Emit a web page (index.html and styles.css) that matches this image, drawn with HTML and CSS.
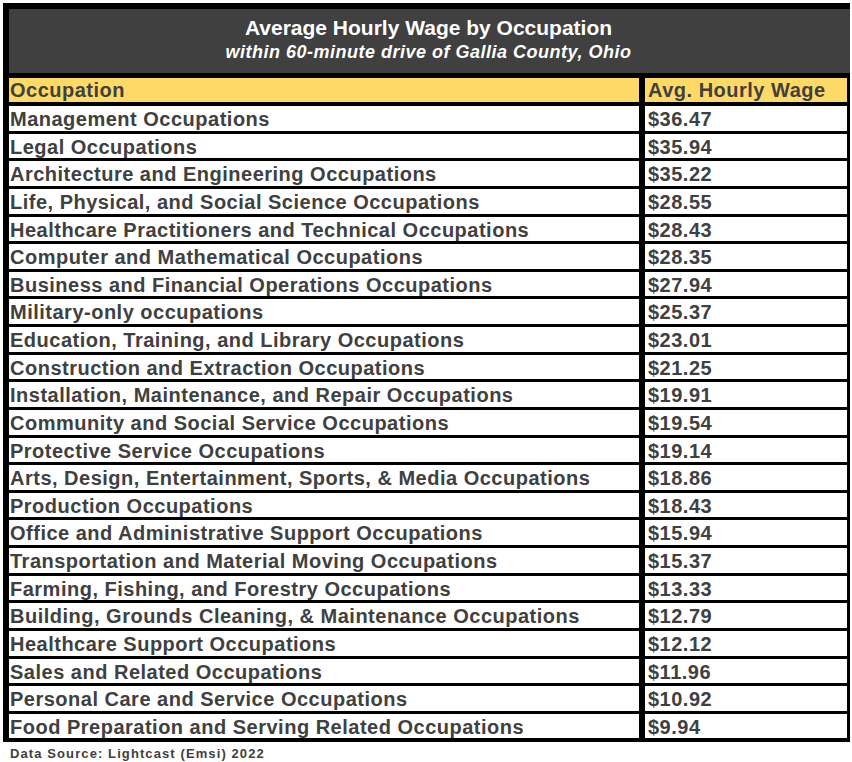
FILE: index.html
```html
<!DOCTYPE html>
<html>
<head>
<meta charset="utf-8">
<link rel="stylesheet" href="styles.css">
</head>
<body>
<div class="frame">
  <div class="banner">
    <div class="title">Average Hourly Wage by Occupation</div>
    <div class="subtitle">within 60-minute drive of Gallia County, Ohio</div>
  </div>
  <div class="thead">
    <div class="hcell">Occupation</div>
    <div class="hcell num">Avg. Hourly Wage</div>
  </div>
  <div class="tbody">
    <div class="cell">Management Occupations</div><div class="cell num">$36.47</div>
    <div class="cell">Legal Occupations</div><div class="cell num">$35.94</div>
    <div class="cell">Architecture and Engineering Occupations</div><div class="cell num">$35.22</div>
    <div class="cell">Life, Physical, and Social Science Occupations</div><div class="cell num">$28.55</div>
    <div class="cell">Healthcare Practitioners and Technical Occupations</div><div class="cell num">$28.43</div>
    <div class="cell">Computer and Mathematical Occupations</div><div class="cell num">$28.35</div>
    <div class="cell">Business and Financial Operations Occupations</div><div class="cell num">$27.94</div>
    <div class="cell">Military-only occupations</div><div class="cell num">$25.37</div>
    <div class="cell">Education, Training, and Library Occupations</div><div class="cell num">$23.01</div>
    <div class="cell">Construction and Extraction Occupations</div><div class="cell num">$21.25</div>
    <div class="cell">Installation, Maintenance, and Repair Occupations</div><div class="cell num">$19.91</div>
    <div class="cell">Community and Social Service Occupations</div><div class="cell num">$19.54</div>
    <div class="cell">Protective Service Occupations</div><div class="cell num">$19.14</div>
    <div class="cell">Arts, Design, Entertainment, Sports, &amp; Media Occupations</div><div class="cell num">$18.86</div>
    <div class="cell">Production Occupations</div><div class="cell num">$18.43</div>
    <div class="cell">Office and Administrative Support Occupations</div><div class="cell num">$15.94</div>
    <div class="cell">Transportation and Material Moving Occupations</div><div class="cell num">$15.37</div>
    <div class="cell">Farming, Fishing, and Forestry Occupations</div><div class="cell num">$13.33</div>
    <div class="cell">Building, Grounds Cleaning, &amp; Maintenance Occupations</div><div class="cell num">$12.79</div>
    <div class="cell">Healthcare Support Occupations</div><div class="cell num">$12.12</div>
    <div class="cell">Sales and Related Occupations</div><div class="cell num">$11.96</div>
    <div class="cell">Personal Care and Service Occupations</div><div class="cell num">$10.92</div>
    <div class="cell">Food Preparation and Serving Related Occupations</div><div class="cell num">$9.94</div>
  </div>
</div>
<div class="source">Data Source: Lightcast (Emsi) 2022</div>
</body>
</html>
```

FILE: styles.css
```css
html, body {
  margin: 0;
  padding: 0;
  background: #ffffff;
}
body {
  font-family: "Liberation Sans", Arial, sans-serif;
  font-weight: bold;
  color: #404040;
}
.frame {
  margin: 3px 0 0 3px;
  width: 841px;
  padding: 6px 0 4px 6px;
  background: #000000;
}
.banner {
  height: 64px;
  background: #404040;
  color: #ffffff;
  text-align: center;
  display: flex;
  flex-direction: column;
  justify-content: center;
  margin-bottom: 5px;
  padding-right: 2px;
}
.title {
  font-size: 21px;
  line-height: 24px;
  margin-top: -2px;
}
.subtitle {
  font-size: 18px;
  font-style: italic;
  letter-spacing: 0.5px;
  line-height: 24px;
}
.thead, .tbody {
  display: grid;
  grid-template-columns: 630px 202px;
  column-gap: 6px;
  margin-right: 3px;
}
.thead {
  margin-bottom: 4px;
}
.tbody {
  row-gap: 3px;
}
.hcell {
  background: #ffd966;
  height: 24px;
  line-height: 25px;
  font-size: 20px;
  letter-spacing: 0.5px;
  padding-left: 1px;
  white-space: nowrap;
}
.cell {
  background: #ffffff;
  height: 24.64px;
  line-height: 26px;
  font-size: 20px;
  letter-spacing: 0.5px;
  padding-left: 1px;
  white-space: nowrap;
}
.num {
  padding-left: 3px;
}
.source {
  margin: 5px 0 0 10px;
  font-size: 13px;
  letter-spacing: 1.1px;
  line-height: 14px;
}
```
